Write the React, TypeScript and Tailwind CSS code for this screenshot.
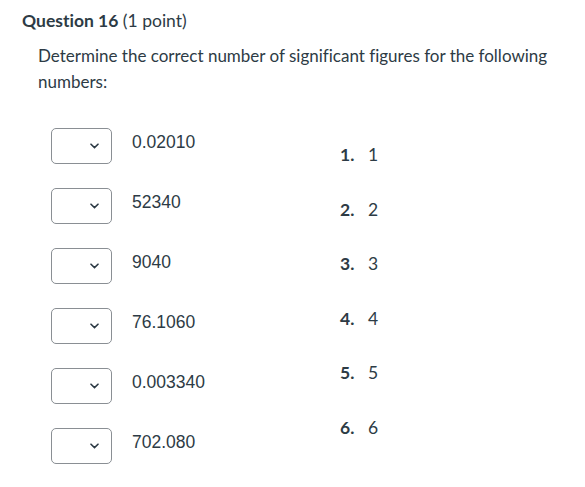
import React from 'react';

const numbers = ['0.02010', '52340', '9040', '76.1060', '0.003340', '702.080'];
const choices = ['1', '2', '3', '4', '5', '6'];

function SelectBox() {
    return (
        <div className="w-[61px] h-[36px] border border-[#8a8f94] rounded-[5px] bg-white flex items-center justify-end pr-[12px]">
            <svg width="9" height="6" viewBox="0 0 9 6" fill="none">
                <path d="M1 1.2 L4.5 4.6 L8 1.2" stroke="#2d3b45" strokeWidth="1.6" strokeLinecap="round" />
            </svg>
        </div>
    );
}

export default function App() {
    return (
        <div className="w-[585px] h-[487px] bg-white text-[#2d3b45] font-['Lato',sans-serif] [font-variant-ligatures:none] overflow-hidden">
            {/* Header */}
            <div className="pl-[22px] pt-[8px] text-[17.5px] leading-[26px]">
                <span className="font-bold">Question 16</span> (1 point)
            </div>

            {/* Question text */}
            <p className="pl-[38px] pr-[20px] mt-[9px] text-[17px] leading-[26px]">
                Determine the correct number of significant figures for the following numbers:
            </p>

            <div className="flex mt-[33px]">
                {/* Matching rows */}
                <div className="pl-[51px] w-[340px] flex flex-col gap-[24px]">
                    {numbers.map((n) => (
                        <div key={n} className="flex items-start gap-[20px] h-[36px]">
                            <SelectBox />
                            <span className="font-['Liberation_Sans',Arial,sans-serif] text-[17.5px] leading-[26px] mt-[1px]">
                                {n}
                            </span>
                        </div>
                    ))}
                </div>

                {/* Answer list */}
                <ol className="flex flex-col gap-[28.6px] pt-[14px] text-[17.5px] leading-[26px]">
                    {choices.map((c, i) => (
                        <li key={c} className="flex">
                            <span className="font-bold w-[28px]">{i + 1}.</span>
                            <span>{c}</span>
                        </li>
                    ))}
                </ol>
            </div>
        </div>
    );
}
